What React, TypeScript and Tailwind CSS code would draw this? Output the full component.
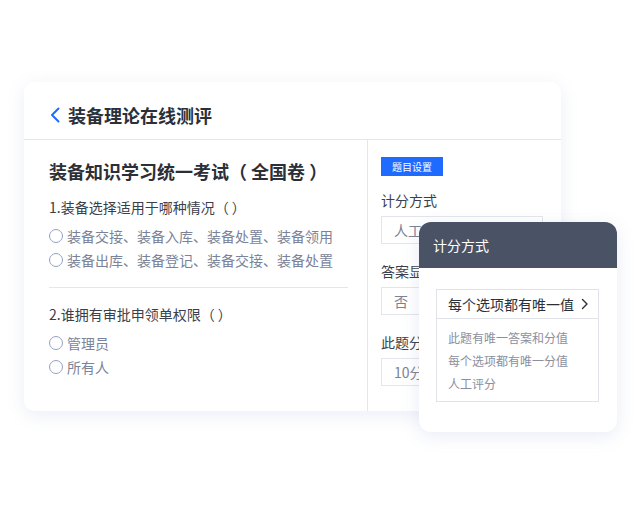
const font = {
  fontFamily: '"Noto Sans CJK SC", "Noto Sans", sans-serif',
};

function Radio({ label }: { label: string }) {
  return (
    <div className="flex items-center h-6 gap-[4px]">
      <span className="w-[14px] h-[14px] rounded-full border border-[#93a1c4] bg-white" />
      <span className="text-[14px] text-[#7a8399] leading-none">{label}</span>
    </div>
  );
}

function Field({ label, value }: { label: string; value: string }) {
  return (
    <div className="flex flex-col">
      <div className="text-[14px] text-[#3a3f4b] leading-5 h-5">{label}</div>
      <div className="mt-[6px] w-[162px] h-[28px] border border-[#e3e5ea] flex items-center pl-3 text-[14px] text-[#7b8294]">
        {value}
      </div>
    </div>
  );
}

export default function App() {
  return (
    <div className="w-[640px] h-[520px] bg-white overflow-hidden" style={font}>
      <div className="pt-[82px] pl-[24px]">
        <div className="relative w-[537px] h-[329px]">
          <div className="w-full h-full bg-white rounded-[10px] shadow-[0_4px_18px_rgba(120,135,200,0.14)] flex flex-col overflow-hidden">
            <div className="h-[58px] shrink-0 border-b border-[#e4e6eb] flex items-center pl-[26px] pt-[8px] gap-[8px]">
              <svg width="10" height="16" viewBox="0 0 10 16" fill="none">
                <path d="M8.5 1.5L2 8l6.5 6.5" stroke="#1f6bff" strokeWidth="2" strokeLinecap="round" strokeLinejoin="round" />
              </svg>
              <span className="text-[18px] font-bold text-[#2b2f38] leading-none">装备理论在线测评</span>
            </div>
            <div className="flex flex-1">
              <div className="w-[344px] border-r border-[#e4e6eb] pl-[25px] pr-[20px] pt-[19px]">
                <div className="text-[18px] font-bold text-[#2b2f38] leading-6 whitespace-pre">装备知识学习统一考试（ 全国卷 ）</div>
                <div className="mt-[12px] text-[14px] text-[#3a3f4b] leading-6 whitespace-pre">1.装备选择适用于哪种情况（ ）</div>
                <div className="mt-[5px]">
                  <Radio label="装备交接、装备入库、装备处置、装备领用" />
                  <Radio label="装备出库、装备登记、装备交接、装备处置" />
                </div>
                <div className="mt-[15px] w-[299px] border-t border-[#e4e6eb]" />
                <div className="mt-[14px] text-[14px] text-[#3a3f4b] leading-6 whitespace-pre">2.谁拥有审批申领单权限（ ）</div>
                <div className="mt-[5px]">
                  <Radio label="管理员" />
                  <Radio label="所有人" />
                </div>
              </div>
              <div className="flex-1 pl-[13px] pt-[17px] flex flex-col">
                <div className="w-[62px] h-[19px] bg-[#1f6bff] flex items-center justify-center text-[10px] text-white leading-none">
                  题目设置
                </div>
                <div className="mt-[14px] flex flex-col gap-[17px]">
                  <Field label="计分方式" value="人工评分" />
                  <Field label="答案显示" value="否" />
                  <Field label="此题分值" value="10分" />
                </div>
              </div>
            </div>
          </div>

          <div className="absolute left-[395px] top-[140px] w-[198px] h-[210px] bg-white rounded-[12px] shadow-[0_4px_18px_rgba(120,135,200,0.16)] overflow-hidden flex flex-col">
            <div className="h-[46px] bg-[#4a5366] flex items-center pl-[14px] text-[14px] text-white">计分方式</div>
            <div className="pt-[21px] pl-[17px]">
              <div className="w-[163px] h-[113px] border border-[#e1e3e8] flex flex-col">
                <div className="h-[29px] border-b border-[#e1e3e8] flex items-center justify-between pl-[11px] pr-[9px]">
                  <span className="text-[14px] text-[#2b2f38]">每个选项都有唯一值</span>
                  <svg width="8" height="12" viewBox="0 0 8 12" fill="none">
                    <path d="M1.5 1.5L6 6l-4.5 4.5" stroke="#2b2f38" strokeWidth="1.4" strokeLinecap="round" strokeLinejoin="round" />
                  </svg>
                </div>
                <div className="pt-[7px] pl-[11px] flex flex-col text-[12px] text-[#8a90a0]">
                  <div className="h-[23px] flex items-center">此题有唯一答案和分值</div>
                  <div className="h-[23px] flex items-center">每个选项都有唯一分值</div>
                  <div className="h-[23px] flex items-center">人工评分</div>
                </div>
              </div>
            </div>
          </div>
        </div>
      </div>
    </div>
  );
}
